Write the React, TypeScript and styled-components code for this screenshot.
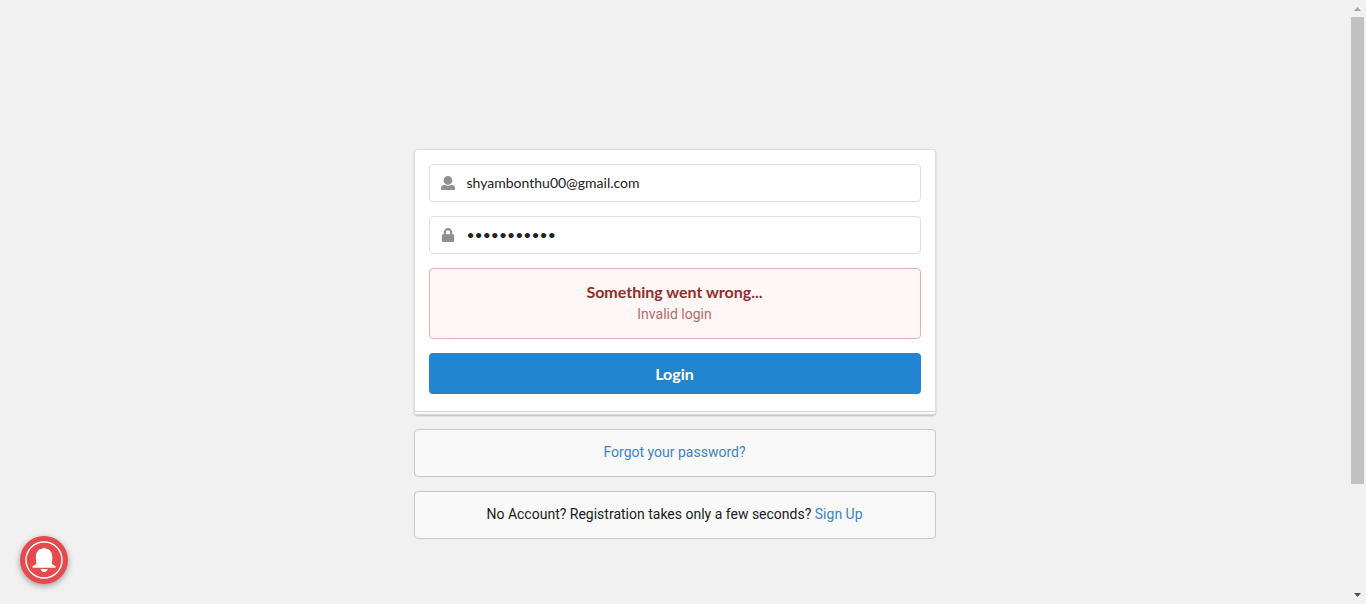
import React, { useState } from 'react';
import styled, { createGlobalStyle } from 'styled-components';

const GlobalStyle = createGlobalStyle`
  *, *::before, *::after { box-sizing: border-box; }
  html, body { margin: 0; background: #f1f1f1; }
  body {
    font-family: Roboto, "Liberation Sans", sans-serif;
    font-size: 14px;
    line-height: 18px;
    color: #212121;
  }
`;

const Page = styled.div`
  display: flex;
  min-height: 100vh;
`;

const Main = styled.main`
  flex: 1;
  display: flex;
  flex-direction: column;
  align-items: center;
  justify-content: center;
  padding: 84px 14px 0;
`;

const Column = styled.div`
  display: flex;
  flex-direction: column;
  gap: 14px;
  width: 100%;
  max-width: 522px;
`;

const LoginForm = styled.form`
  position: relative;
  display: flex;
  flex-direction: column;
  gap: 14px;
  padding: 14px 14px 20px;
  background: #fff;
  border: 1px solid #dededf;
  border-bottom-color: #d4d4d5;
  border-radius: 4px;
  box-shadow: 0 1px 2px rgba(34, 36, 38, 0.25);

  &::after {
    content: '';
    position: absolute;
    left: 0;
    right: 0;
    bottom: 0;
    height: 3px;
    background: #f9f9f9;
    border-top: 1px solid #d4d4d5;
  }
`;

const Field = styled.label`
  display: flex;
  align-items: center;
  height: 38px;
  padding: 0 11px;
  gap: 12px;
  background: #fff;
  border: 1px solid #dededf;
  border-radius: 4px;
`;

const FieldIcon = styled.svg`
  flex: none;
  width: 14px;
  height: 14px;
  fill: #909090;
`;

const TextInput = styled.input`
  flex: 1;
  min-width: 0;
  padding: 0;
  border: 0;
  outline: 0;
  background: transparent;
  color: #212121;
  font: 14px/18px Lato, "Liberation Sans", sans-serif;
`;

const ErrorMessage = styled.div`
  padding: 13px 14px 15px;
  text-align: center;
  background: #fff6f6;
  border: 1px solid #e0b4b4;
  border-radius: 4px;
`;

const ErrorTitle = styled.h2`
  margin: 0;
  font: bold 16px/20px Lato, "Liberation Sans", sans-serif;
  color: #912d2b;
`;

const ErrorText = styled.p`
  margin: 3px 0 0;
  color: #9f3a38;
  opacity: 0.75;
`;

const SubmitButton = styled.button`
  height: 41px;
  border: 0;
  border-radius: 4px;
  background: #2185d0;
  color: #fff;
  font: bold 16px/20px Lato, "Liberation Sans", sans-serif;
  cursor: pointer;
`;

const Notice = styled.div`
  padding: 13px 14px 15px;
  text-align: center;
  background: #f8f8f8;
  border: 1px solid #c9c9c9;
  border-radius: 4px;
`;

const Link = styled.a`
  color: #4183c4;
  text-decoration: none;
`;

const BellButton = styled.button`
  position: fixed;
  left: 20px;
  bottom: 20px;
  width: 48px;
  height: 48px;
  padding: 0;
  border: 0;
  border-radius: 50%;
  background: #e54b4d;
  box-shadow: 0 2px 6px rgba(0, 0, 0, 0.35);
  cursor: pointer;

  svg { display: block; width: 100%; height: 100%; }
`;

const Scrollbar = styled.div`
  position: sticky;
  top: 0;
  display: flex;
  flex-direction: column;
  flex: none;
  width: 17px;
  height: 100vh;
  padding: 0 2px;
  background: #f1f1f1;
`;

const ScrollArrow = styled.svg`
  flex: none;
  width: 13px;
  height: 17px;
`;

const ScrollTrack = styled.div`
  flex: 1;
`;

const ScrollThumb = styled.div`
  height: 82%;
  background: #c1c1c1;
`;

export default function App() {
  const [email, setEmail] = useState('shyambonthu00@gmail.com');
  const [password, setPassword] = useState('password123');

  return (
    <Page>
      <GlobalStyle />
      <Main>
        <Column>
          <LoginForm onSubmit={(e: React.FormEvent) => e.preventDefault()}>
            <Field>
              <FieldIcon viewBox="0 0 512 512" aria-hidden="true">
                <path d="M256 0c88.366 0 160 71.634 160 160s-71.634 160-160 160S96 248.366 96 160 167.634 0 256 0zm183.283 333.821l-71.313-17.828c-74.923 53.89-165.738 41.864-223.94 0l-71.313 17.828C29.981 344.505 0 382.903 0 426.955V464c0 26.51 21.49 48 48 48h416c26.51 0 48-21.49 48-48v-37.045c0-44.052-29.981-82.45-72.717-93.134z" />
              </FieldIcon>
              <TextInput
                type="email"
                aria-label="E-mail address"
                value={email}
                onChange={(e) => setEmail(e.target.value)}
              />
            </Field>
            <Field>
              <FieldIcon viewBox="0 0 448 512" aria-hidden="true">
                <path d="M400 224h-24v-72C376 68.2 307.8 0 224 0S72 68.2 72 152v72H48c-26.5 0-48 21.5-48 48v192c0 26.5 21.5 48 48 48h352c26.5 0 48-21.5 48-48V272c0-26.5-21.5-48-48-48zm-104 0H152v-72c0-39.7 32.3-72 72-72s72 32.3 72 72v72z" />
              </FieldIcon>
              <TextInput
                type="password"
                aria-label="Password"
                value={password}
                onChange={(e) => setPassword(e.target.value)}
              />
            </Field>
            <ErrorMessage role="alert">
              <ErrorTitle>Something went wrong...</ErrorTitle>
              <ErrorText>Invalid login</ErrorText>
            </ErrorMessage>
            <SubmitButton type="submit">Login</SubmitButton>
          </LoginForm>
          <Notice>
            <Link href="#forgot">Forgot your password?</Link>
          </Notice>
          <Notice>
            No Account? Registration takes only a few seconds? <Link href="#signup">Sign Up</Link>
          </Notice>
        </Column>
      </Main>
      <Scrollbar aria-hidden="true">
        <ScrollArrow viewBox="0 0 13 17">
          <path d="M3 11 6.5 7 10 11z" fill="#a3a3a3" />
        </ScrollArrow>
        <ScrollTrack>
          <ScrollThumb />
        </ScrollTrack>
        <ScrollArrow viewBox="0 0 13 17">
          <path d="M3 6h7L6.5 10z" fill="#505050" />
        </ScrollArrow>
      </Scrollbar>
      <BellButton type="button" aria-label="Notifications">
        <svg viewBox="0 0 99.7 99.7">
          <path
            fill="#fff"
            d="M50.1 66.2H27.7s-2-.2-2-2.1c0-1.9 1.7-2 1.7-2s6.7-3.2 6.7-5.5S33 52.7 33 43.3s6-16.6 13.2-16.6c0 0 1-2.4 3.9-2.4 2.8 0 3.8 2.4 3.8 2.4 7.2 0 13.2 7.2 13.2 16.6s-1 11-1 13.3c0 2.3 6.7 5.5 6.7 5.5s1.7.1 1.7 2c0 1.8-2.1 2.1-2.1 2.1H50.1zm-7.2 2.3h14.5s-1 6.3-7.2 6.3-7.3-6.3-7.3-6.3z"
          />
          <circle cx="49.9" cy="49.9" r="37.4" fill="none" stroke="#fff" strokeWidth="3" />
        </svg>
      </BellButton>
    </Page>
  );
}
